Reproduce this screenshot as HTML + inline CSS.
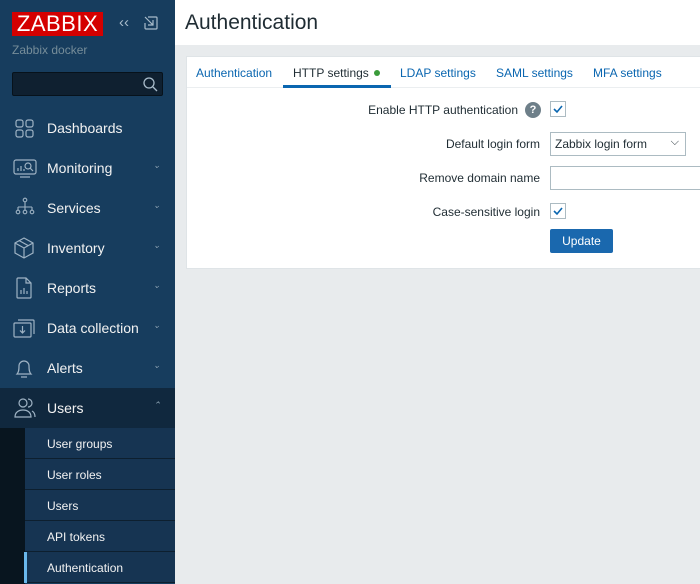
<!DOCTYPE html>
<html><head><style>
*{margin:0;padding:0;box-sizing:border-box}
body{width:700px;height:584px;overflow:hidden;font-family:"Liberation Sans",Arial,sans-serif;background:#e8ebed;position:relative}
.sb{position:absolute;left:0;top:0;width:175px;height:584px;background:#173d5e}
.logo{position:absolute;left:12px;top:12px;width:91px;height:24px;background:#d40000;color:#fff;font-size:22px;line-height:24px;text-align:center;letter-spacing:0.5px}
.inst{position:absolute;left:12px;top:43px;color:#768d99;font-size:12px}
.search{position:absolute;left:12px;top:72px;width:151px;height:24px;background:#0f2030;border:1px solid #07121b;border-radius:2px}
.item{position:absolute;left:0;width:175px;height:40px;color:#f2f2f2;font-size:14px}
.item span{position:absolute;left:47px;top:12px}
.item .ch{position:absolute;left:153px;top:12px;font-size:9px;color:#8aa0b0}
.item svg{position:absolute;left:13px;top:9px}
.sub{position:absolute;left:25px;width:150px;height:31px;background:#163452;border-bottom:1px solid #0d1f2f;color:#f2f2f2;font-size:12px;padding:9px 0 0 22px}
.main{position:absolute;left:175px;top:0;width:525px;height:584px}
.hdr{position:absolute;left:0;top:0;width:525px;height:45px;background:#fff}
.hdr h1{position:absolute;left:10px;top:11px;font-size:21px;font-weight:normal;color:#1f2c33}
.box{position:absolute;left:11px;top:56px;width:520px;height:213px;background:#fff;border:1px solid #dfe4e7}
.tabs{position:absolute;left:0;top:0;width:520px;height:31px;border-bottom:1px solid #ebeef0}
.tab{position:absolute;top:9px;font-size:12px;color:#0a66b0}
.lbl{position:absolute;font-size:12px;color:#1f2c33;text-align:right;right:165px}
.cb{position:absolute;left:363px;width:16px;height:16px;border:1px solid #acbbc2;background:#fff}
</style></head><body>
<div class="sb">
<div class="logo">ZABBIX</div>
<div style="position:absolute;left:119px;top:14px;color:#a9bccb;font-size:15px">‹‹</div>
<svg style="position:absolute;left:144px;top:16px" width="14" height="14" viewBox="0 0 14 14" fill="none" stroke="#a9bccb" stroke-width="1.2"><path d="M4 1H12a1 1 0 0 1 1 1V12a1 1 0 0 1-1 1H2a1 1 0 0 1-1-1V7M1 1l8 8M4 9h5V4"/></svg>
<div class="inst">Zabbix docker</div>
<div class="search"><svg style="position:absolute;right:4px;top:3px" width="16" height="16" viewBox="0 0 16 16" fill="none" stroke="#a9bccb" stroke-width="1.3"><circle cx="7" cy="7" r="5"/><path d="M11 11l4 4"/></svg></div>
<div class="item" style="top:108px"><svg width="22" height="22" viewBox="0 0 22 22" fill="none" stroke="#9fb3c4" stroke-width="1.2"><rect x="3" y="3" width="7" height="7" rx="2"/><rect x="13" y="3" width="7" height="7" rx="2"/><rect x="3" y="13" width="7" height="7" rx="2"/><rect x="13" y="13" width="7" height="7" rx="2"/></svg><span>Dashboards</span></div>
<div class="item" style="top:148px"><svg width="24" height="22" viewBox="0 0 24 22" fill="none" stroke="#9fb3c4" stroke-width="1.2"><rect x="1" y="3" width="22" height="14" rx="2"/><path d="M7 20h10M5 14v-3M8 14v-5M11 14v-2"/><circle cx="15" cy="9" r="3"/><path d="M17 11l3 3"/></svg><span>Monitoring</span><i class="ch">⌄</i></div>
<div class="item" style="top:188px"><svg width="24" height="22" viewBox="0 0 24 22" fill="none" stroke="#9fb3c4" stroke-width="1.1"><circle cx="12" cy="3" r="1.8"/><path d="M12 5v5M5 10h14M5 10v3M12 10v3M19 10v3"/><circle cx="5" cy="15" r="1.8"/><circle cx="12" cy="15" r="1.8"/><circle cx="19" cy="15" r="1.8"/></svg><span>Services</span><i class="ch">⌄</i></div>
<div class="item" style="top:228px"><svg width="22" height="22" viewBox="0 0 22 22" fill="none" stroke="#9fb3c4" stroke-width="1.2"><path d="M11 1L20 6V16L11 21L2 16V6ZM2 6l9 5 9-5M11 11v10M6 3.5l9 5"/></svg><span>Inventory</span><i class="ch">⌄</i></div>
<div class="item" style="top:268px"><svg width="22" height="22" viewBox="0 0 22 22" fill="none" stroke="#9fb3c4" stroke-width="1.2"><path d="M5 1h8l5 5v14a1 1 0 0 1-1 1H5a1 1 0 0 1-1-1V2a1 1 0 0 1 1-1zM13 1v5h5M8 17v-4M11 17v-6M14 17v-3"/></svg><span>Reports</span><i class="ch">⌄</i></div>
<div class="item" style="top:308px"><svg width="24" height="22" viewBox="0 0 24 22" fill="none" stroke="#9fb3c4" stroke-width="1.2"><path d="M5 3h15a1 1 0 0 1 1 1v13"/><rect x="1" y="6" width="17" height="14" rx="1"/><path d="M9.5 9v7M7 13.5l2.5 2.5 2.5-2.5"/></svg><span>Data collection</span><i class="ch">⌄</i></div>
<div class="item" style="top:348px"><svg width="22" height="22" viewBox="0 0 22 22" fill="none" stroke="#9fb3c4" stroke-width="1.2"><path d="M4 17c2-2 2-5 2-8a5 5 0 0 1 10 0c0 3 0 6 2 8zM8 20h6"/></svg><span>Alerts</span><i class="ch">⌄</i></div>
<div class="item" style="top:388px;background:#10283e"><svg width="24" height="22" viewBox="0 0 24 22" fill="none" stroke="#9fb3c4" stroke-width="1.2"><circle cx="10" cy="6" r="4"/><path d="M2 20c0-5 4-7 8-7s8 2 8 7zM15 2a4 4 0 0 1 0 8M19 14c2 1 3 3 3 6"/></svg><span>Users</span><i class="ch">⌃</i></div>
<div style="position:absolute;left:0;top:428px;width:25px;height:156px;background:#08151f"></div>
<div class="sub" style="top:428px">User groups</div>
<div class="sub" style="top:459px">User roles</div>
<div class="sub" style="top:490px">Users</div>
<div class="sub" style="top:521px">API tokens</div>
<div class="sub" style="top:552px">Authentication</div>
<div style="position:absolute;left:24px;top:552px;width:3px;height:31px;background:#6ab8ec"></div>
</div>
<div class="main">
<div class="hdr"><h1>Authentication</h1></div>
<div class="box">
<div class="tabs">
<div class="tab" style="left:9px">Authentication</div>
<div class="tab" style="left:106px;color:#1f2c33">HTTP settings <span style="display:inline-block;width:6px;height:6px;border-radius:3px;background:#3a9b3a;vertical-align:1px;margin-left:2px"></span></div>
<div style="position:absolute;left:96px;top:28px;width:108px;height:3px;background:#0a66b0"></div>
<div class="tab" style="left:213px">LDAP settings</div>
<div class="tab" style="left:309px">SAML settings</div>
<div class="tab" style="left:406px">MFA settings</div>
</div>
<div class="lbl" style="top:46px;right:187px">Enable HTTP authentication</div>
<div style="position:absolute;left:338px;top:45px;width:16px;height:16px;border-radius:8px;background:#6e7f89;color:#fff;font-size:11px;font-weight:bold;text-align:center;line-height:16px">?</div>
<div class="cb" style="top:44px"><svg width="14" height="14" viewBox="0 0 14 14" fill="none" stroke="#0a66b0" stroke-width="1.6"><path d="M3 7l3 3 5-6"/></svg></div>
<div class="lbl" style="top:80px">Default login form</div>
<div style="position:absolute;left:363px;top:75px;width:136px;height:24px;border:1px solid #acbbc2;font-size:12px;color:#1f2c33;padding:4px 4px">Zabbix login form<span style="position:absolute;right:6px;top:3px;font-size:11px">⌵</span></div>
<div class="lbl" style="top:114px">Remove domain name</div>
<div style="position:absolute;left:363px;top:109px;width:160px;height:24px;border:1px solid #acbbc2"></div>
<div class="lbl" style="top:148px">Case-sensitive login</div>
<div class="cb" style="top:146px"><svg width="14" height="14" viewBox="0 0 14 14" fill="none" stroke="#0a66b0" stroke-width="1.6"><path d="M3 7l3 3 5-6"/></svg></div>
<div style="position:absolute;left:363px;top:172px;width:63px;height:24px;background:#1a68ae;border-radius:2px;color:#fff;font-size:12px;text-align:center;line-height:24px">Update</div>
</div>
</div>
</body></html>
